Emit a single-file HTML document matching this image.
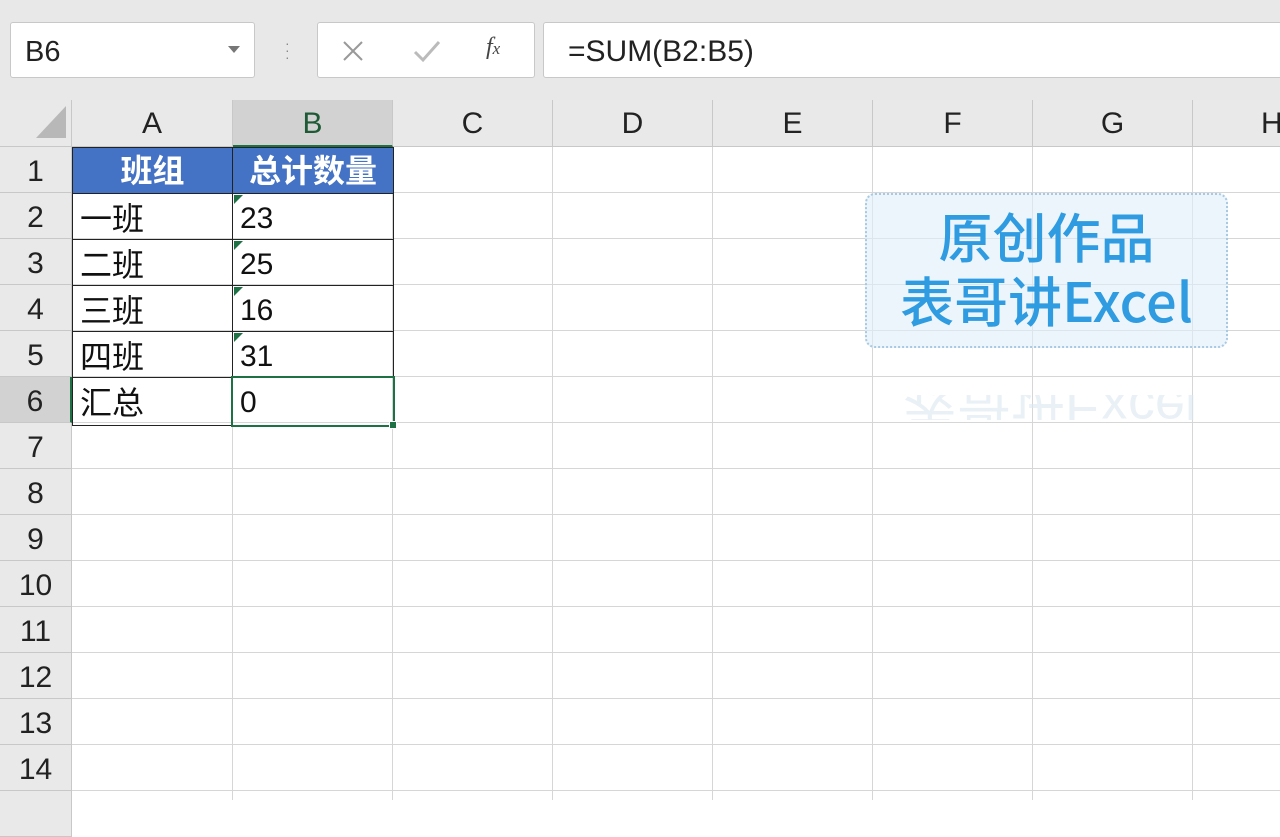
<!DOCTYPE html><html><head><meta charset="utf-8"><style>
body{margin:0;width:1280px;height:800px;overflow:hidden;background:#fff;font-family:"Liberation Sans","Noto Sans CJK SC",sans-serif;position:relative}
.a{position:absolute;box-sizing:border-box}
.top{left:0;top:0;width:1280px;height:100px;background:#e8e8e8}
.box{background:#fff;border:1px solid #c8c8c8;border-radius:3px}
.ch{top:100px;height:47px;background:#e9e9e9;border-right:1px solid #c8c8c8;border-bottom:1px solid #c8c8c8;font-size:30px;text-align:center;line-height:48px;color:#222}
.rh{left:0;width:72px;height:46px;background:#e9e9e9;border-bottom:1px solid #c8c8c8;border-right:1px solid #c8c8c8;font-size:30px;text-align:center;line-height:50px;color:#222}
.vl{top:147px;width:1px;height:653px;background:#d6d6d6}
.hl{left:72px;width:1208px;height:1px;background:#d6d6d6}
.c{font-size:30px;line-height:50px;padding-left:8px;color:#111;font-family:"Liberation Sans","Noto Sans CJK SC",sans-serif}
.cz{font-size:32px}
.tri{width:0;height:0;border-top:9px solid #1e7145;border-right:9px solid transparent}
</style></head><body>
<div class="a top"></div>
<div class="a box" style="left:10px;top:22px;width:245px;height:56px;font-size:29px;line-height:58px;padding-left:14px;color:#222">B6</div>
<div class="a" style="left:228px;top:46px;width:0;height:0;border-left:6px solid transparent;border-right:6px solid transparent;border-top:7px solid #777"></div>
<div class="a" style="left:285px;top:40px;color:#888;font-size:14px;line-height:7px">·<br>·<br>·</div>
<div class="a box" style="left:317px;top:22px;width:218px;height:56px"></div>
<svg class="a" style="left:340px;top:38px" width="26" height="26"><path d="M4 4L22 22M22 4L4 22" stroke="#999" stroke-width="2"/></svg>
<svg class="a" style="left:412px;top:38px" width="30" height="26"><path d="M3 14L11 22L27 4" stroke="#bbb" stroke-width="3" fill="none"/></svg>
<div class="a" style="left:486px;top:34px;font-size:24px;color:#444;font-style:italic;font-family:'Liberation Serif',serif">f<span style="font-size:17px">x</span></div>
<div class="a box" style="left:543px;top:22px;width:745px;height:56px;font-size:30px;line-height:58px;padding-left:24px;color:#222">=SUM(B2:B5)</div>

<div class="a" style="left:0;top:100px;width:72px;height:47px;background:#e9e9e9;border-right:1px solid #c8c8c8;border-bottom:1px solid #c8c8c8"></div>
<div class="a" style="left:36px;top:106px;width:0;height:0;border-left:30px solid transparent;border-bottom:32px solid #b8b8b8"></div>
<div class="a ch" style="left:72px;width:161px">A</div>
<div class="a ch" style="left:233px;width:160px;background:#d2d2d2;color:#1e5a35;border-bottom:2px solid #1e7145">B</div>
<div class="a ch" style="left:393px;width:160px">C</div>
<div class="a ch" style="left:553px;width:160px">D</div>
<div class="a ch" style="left:713px;width:160px">E</div>
<div class="a ch" style="left:873px;width:160px">F</div>
<div class="a ch" style="left:1033px;width:160px">G</div>
<div class="a ch" style="left:1193px;width:100px;text-align:left;padding-left:68px">H</div>

<div class="a rh" style="top:147px">1</div><div class="a rh" style="top:193px">2</div><div class="a rh" style="top:239px">3</div><div class="a rh" style="top:285px">4</div><div class="a rh" style="top:331px">5</div>
<div class="a rh" style="top:377px;background:#d2d2d2;border-right:2px solid #1e7145">6</div>
<div class="a rh" style="top:423px">7</div><div class="a rh" style="top:469px">8</div><div class="a rh" style="top:515px">9</div><div class="a rh" style="top:561px">10</div><div class="a rh" style="top:607px">11</div><div class="a rh" style="top:653px">12</div><div class="a rh" style="top:699px">13</div><div class="a rh" style="top:745px">14</div><div class="a rh" style="top:791px"></div>

<div class="a vl" style="left:232px"></div><div class="a vl" style="left:392px"></div><div class="a vl" style="left:552px"></div><div class="a vl" style="left:712px"></div><div class="a vl" style="left:872px"></div><div class="a vl" style="left:1032px"></div><div class="a vl" style="left:1192px"></div>
<div class="a hl" style="top:192px"></div><div class="a hl" style="top:238px"></div><div class="a hl" style="top:284px"></div><div class="a hl" style="top:330px"></div><div class="a hl" style="top:376px"></div><div class="a hl" style="top:422px"></div><div class="a hl" style="top:468px"></div><div class="a hl" style="top:514px"></div><div class="a hl" style="top:560px"></div><div class="a hl" style="top:606px"></div><div class="a hl" style="top:652px"></div><div class="a hl" style="top:698px"></div><div class="a hl" style="top:744px"></div><div class="a hl" style="top:790px"></div>

<div class="a" style="left:72px;top:147px;width:322px;height:47px;background:#4472c4;border:1px solid #222"></div>
<div class="a" style="left:232px;top:147px;width:1px;height:47px;background:#222"></div>
<div class="a" style="left:72px;top:147px;width:161px;height:47px;color:#fff;font-weight:bold;font-size:32px;text-align:center;line-height:48px">班组</div>
<div class="a" style="left:233px;top:147px;width:160px;height:47px;color:#fff;font-weight:bold;font-size:32px;text-align:center;line-height:48px">总计数量</div>

<div class="a" style="left:72px;top:193px;width:322px;height:233px;border:1px solid #222"></div>
<div class="a" style="left:232px;top:193px;width:1px;height:233px;background:#222"></div>
<div class="a" style="left:72px;top:239px;width:322px;height:1px;background:#222"></div>
<div class="a" style="left:72px;top:285px;width:322px;height:1px;background:#222"></div>
<div class="a" style="left:72px;top:331px;width:322px;height:1px;background:#222"></div>
<div class="a" style="left:72px;top:377px;width:322px;height:1px;background:#222"></div>

<div class="a c cz" style="left:72px;top:194px">一班</div><div class="a c cz" style="left:72px;top:240px">二班</div><div class="a c cz" style="left:72px;top:286px">三班</div><div class="a c cz" style="left:72px;top:332px">四班</div><div class="a c cz" style="left:72px;top:378px">汇总</div>
<div class="a c" style="left:232px;top:194px">23</div><div class="a c" style="left:232px;top:240px">25</div><div class="a c" style="left:232px;top:286px">16</div><div class="a c" style="left:232px;top:332px">31</div><div class="a c" style="left:232px;top:378px">0</div>
<div class="a tri" style="left:234px;top:195px"></div><div class="a tri" style="left:234px;top:241px"></div><div class="a tri" style="left:234px;top:287px"></div><div class="a tri" style="left:234px;top:333px"></div>
<div class="a" style="left:231px;top:376px;width:164px;height:51px;border:2px solid #1e7145"></div>
<div class="a" style="left:389px;top:421px;width:8px;height:8px;background:#1e7145;border:1px solid #fff"></div>

<div class="a" style="left:865px;top:193px;width:363px;height:155px;background:rgba(225,238,250,0.6);border:2px dotted #a9c9e0;border-radius:10px"></div>
<div class="a" style="left:855px;top:203px;width:383px;text-align:center;color:#2f9be0;font-size:54px;line-height:64px;font-weight:500;font-family:'Noto Sans CJK SC',sans-serif;white-space:nowrap">原创作品<br>表哥讲Excel</div>
<div class="a" style="left:880px;top:395px;width:340px;height:25px;overflow:hidden;color:#dbe8f2;font-size:54px;text-align:center;transform:scaleY(-1);opacity:.6;line-height:25px;white-space:nowrap">表哥讲Excel</div>
</body></html>
